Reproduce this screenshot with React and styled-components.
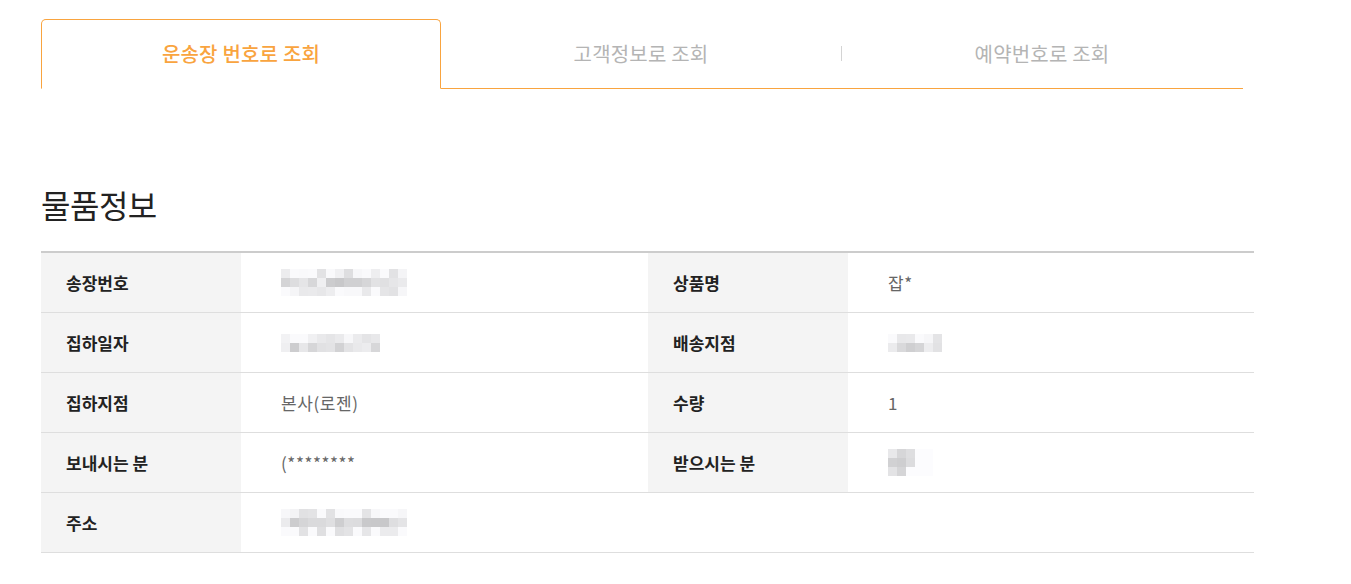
import styled, { createGlobalStyle } from 'styled-components'

const GlobalStyle = createGlobalStyle`
  *, *::before, *::after {
    box-sizing: border-box;
  }
  body {
    margin: 0;
    background: #fff;
    font-family: 'Noto Sans CJK KR', 'Noto Sans', sans-serif;
    color: #222;
  }
`

const ORANGE = '#f9a43f'

const tabs = ['운송장 번호로 조회', '고객정보로 조회', '예약번호로 조회']

// pixelated (blurred) personal data, shades of grey per cell
const mosaics = {
  invoice: { cols: 14, rows: 3, seed: 3 },
  date: { cols: 11, rows: 2, seed: 7 },
  address: { cols: 14, rows: 3, seed: 11 },
  branch: { cols: 6, rows: 2, seed: 5 },
  receiver: { cols: 5, rows: 3, seed: 9, sparse: true },
}

const shade = (seed, i) => {
  const v = Math.abs(Math.sin(seed * 97.3 + i * 12.9898) * 43758.5453) % 1
  return Math.round(200 + v * 40)
}

const Mosaic = ({ cols, rows, seed, sparse }) => {
  const cells = []
  for (let i = 0; i < cols * rows; i++) {
    const r = Math.floor(i / cols)
    const c = i % cols
    let g = shade(seed, i)
    if (r !== 1 && !sparse) g = Math.min(250, g + 22)
    if (sparse && (c > 3 - r || (r === 0 && c > 2))) g = 252
    cells.push(<Cell key={i} style={{ background: `rgb(${g},${g},${g + 2})` }} />)
  }
  return (
    <MosaicGrid $cols={cols} $rows={rows}>
      {cells}
    </MosaicGrid>
  )
}

const rows = [
  [
    { label: '송장번호', value: <Mosaic {...mosaics.invoice} /> },
    { label: '상품명', value: '잡*' },
  ],
  [
    { label: '집하일자', value: <Mosaic {...mosaics.date} /> },
    { label: '배송지점', value: <Mosaic {...mosaics.branch} /> },
  ],
  [
    { label: '집하지점', value: '본사(로젠)' },
    { label: '수량', value: '1' },
  ],
  [
    { label: '보내시는 분', value: '(********' },
    { label: '받으시는 분', value: <Mosaic {...mosaics.receiver} /> },
  ],
  [{ label: '주소', value: <Mosaic {...mosaics.address} /> }, null],
]

const App = () => {
  return (
    <Page>
      <GlobalStyle />
      <TabBar>
        {tabs.map((t, i) => (
          <Tab key={t} $active={i === 0} $divider={i === 2}>
            {t}
          </Tab>
        ))}
      </TabBar>

      <Title>물품정보</Title>

      <Table>
        {rows.map((row, i) => (
          <Row key={i}>
            {row.map((cell, j) =>
              cell ? (
                <Pair key={j}>
                  <Label>{cell.label}</Label>
                  <Value>{cell.value}</Value>
                </Pair>
              ) : (
                <Pair key={j} />
              )
            )}
          </Row>
        ))}
      </Table>
    </Page>
  )
}

const Page = styled.main`
  padding: 19px 0 0 41px;
`

const TabBar = styled.nav`
  display: grid;
  grid-template-columns: 400px 400px 402px;
  width: 1202px;
  height: 70px;
`

const Tab = styled.div`
  position: relative;
  display: flex;
  align-items: center;
  justify-content: center;
  font-size: 20px;
  letter-spacing: 0.2px;
  padding-bottom: 1px;
  color: ${(p) => (p.$active ? ORANGE : '#b4b4b4')};
  font-weight: ${(p) => (p.$active ? 500 : 400)};
  border: 1px solid ${(p) => (p.$active ? ORANGE : 'transparent')};
  border-bottom: 1px solid ${(p) => (p.$active ? 'transparent' : ORANGE)};
  border-radius: ${(p) => (p.$active ? '5px 5px 0 0' : '0')};
  border-left-width: ${(p) => (p.$active ? '1px' : '0')};
  border-right-width: ${(p) => (p.$active ? '1px' : '0')};

  &::before {
    content: '';
    display: ${(p) => (p.$divider ? 'block' : 'none')};
    position: absolute;
    left: 0;
    top: 26px;
    width: 1px;
    height: 15px;
    background: #d4d4d4;
  }
`

const Title = styled.h2`
  margin: 92px 0 0;
  font-size: 32px;
  font-weight: 400;
  line-height: 46px;
  color: #222;
  letter-spacing: -0.5px;
`

const Table = styled.section`
  margin-top: 24px;
  width: 1213px;
  border-top: 2px solid #cccccc;
`

const Row = styled.div`
  display: grid;
  grid-template-columns: 607px 606px;
  height: 60px;
  border-bottom: 1px solid #dedede;
`

const Pair = styled.div`
  display: grid;
  grid-template-columns: 200px 1fr;
`

const Label = styled.div`
  display: flex;
  align-items: center;
  padding-left: 25px;
  background: #f4f4f4;
  font-size: 17px;
  font-weight: 700;
  color: #222;
`

const Value = styled.div`
  display: flex;
  align-items: center;
  padding-left: 40px;
  font-size: 17px;
  letter-spacing: 0.6px;
  color: #666;
`

const MosaicGrid = styled.div`
  display: grid;
  grid-template-columns: repeat(${(p) => p.$cols}, 9px);
  grid-template-rows: repeat(${(p) => p.$rows}, 9px);
  filter: blur(0.6px);
`

const Cell = styled.span`
  display: block;
`

export default App
